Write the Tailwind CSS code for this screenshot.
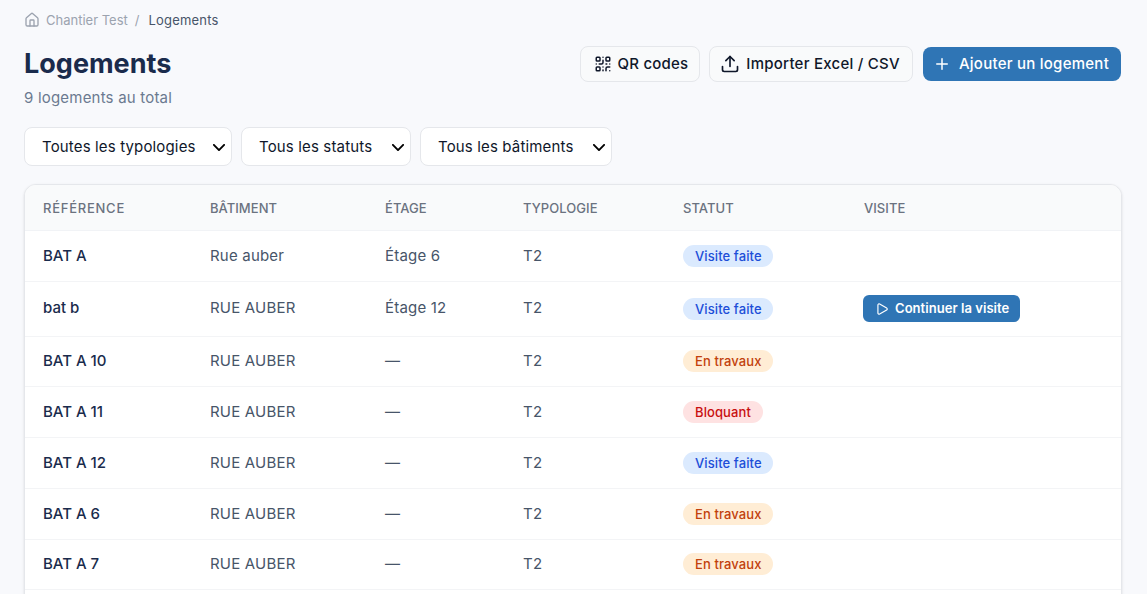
<!DOCTYPE html>
<html lang="fr">
<head>
    <meta charset="UTF-8">
    <meta name="viewport" content="width=device-width, initial-scale=1.0">
    <title>Logements</title>
    <script src="https://cdn.jsdelivr.net/npm/@tailwindcss/browser@4"></script>
</head>
<body class="bg-[#f8f9fc] font-['Inter',sans-serif] h-[594px] overflow-hidden">
<div class="px-6 pt-3">

    <!--breadcrumb-->
    <nav class="flex items-center h-4 text-[13px] leading-4">
        <svg class="w-4 h-4 text-[#9ca3af] mr-1.5" viewBox="0 0 24 24" fill="none" stroke="currentColor" stroke-width="2" stroke-linecap="round" stroke-linejoin="round"><path d="M15 21v-8a1 1 0 0 0-1-1h-4a1 1 0 0 0-1 1v8"/><path d="M3 10a2 2 0 0 1 .709-1.528l7-5.999a2 2 0 0 1 2.582 0l7 5.999A2 2 0 0 1 21 10v9a2 2 0 0 1-2 2H5a2 2 0 0 1-2-2z"/></svg>
        <span class="text-[#9ca3af]">Chantier Test</span>
        <span class="text-[#9ca3af] ml-[7px] mr-[9px]">/</span>
        <span class="text-[#475569] tracking-[0.2px]">Logements</span>
    </nav>

    <!--title + actions-->
    <div class="flex justify-between items-start mt-[19px]">
        <div class="pt-px">
            <h1 class="text-[27px] leading-8 font-bold text-[#1a2b4c]">Logements</h1>
            <p class="text-[15px] leading-5 tracking-[0.2px] text-[#6b7a90] mt-[8px]">9 logements au total</p>
        </div>
        <div class="flex items-center -mt-px mr-0.5">
            <button class="h-9 pl-[13px] pr-[11px] flex items-center gap-1.5 rounded-lg border border-[#e5e7eb] bg-[#f9fafb] text-[15px] tracking-[0.2px] font-medium text-[#0f172a]">
                <svg class="w-[18px] h-[18px]" viewBox="0 0 24 24" fill="none" stroke="currentColor" stroke-width="2" stroke-linecap="round" stroke-linejoin="round"><rect width="5" height="5" x="3" y="3" rx="1"/><rect width="5" height="5" x="16" y="3" rx="1"/><rect width="5" height="5" x="3" y="16" rx="1"/><path d="M21 16h-3a2 2 0 0 0-2 2v3"/><path d="M21 21v.01"/><path d="M12 7v3a2 2 0 0 1-2 2H7"/><path d="M3 12h.01"/><path d="M12 3h.01"/><path d="M12 16v.01"/><path d="M16 12h1"/><path d="M21 12v.01"/><path d="M12 21v-1"/></svg>
                QR codes
            </button>
            <button class="ml-[9px] h-9 pl-2.5 pr-3 flex items-center gap-1.5 rounded-lg border border-[#e5e7eb] bg-[#f9fafb] text-[15px] tracking-[0.25px] font-medium text-[#0f172a]">
                <svg class="w-5 h-5" viewBox="0 0 24 24" fill="none" stroke="currentColor" stroke-width="2" stroke-linecap="round" stroke-linejoin="round"><path d="M21 15v4a2 2 0 0 1-2 2H5a2 2 0 0 1-2-2v-4"/><polyline points="17 8 12 3 7 8"/><line x1="12" x2="12" y1="3" y2="15"/></svg>
                Importer Excel / CSV
            </button>
            <button class="ml-2.5 h-[34px] pl-2.5 pr-3 flex items-center gap-2 rounded-lg bg-[#2f75b5] text-[15px] tracking-[0.25px] font-medium text-white">
                <svg class="w-[18px] h-[18px]" viewBox="0 0 24 24" fill="none" stroke="currentColor" stroke-width="2" stroke-linecap="round" stroke-linejoin="round"><path d="M5 12h14"/><path d="M12 5v14"/></svg>
                Ajouter un logement
            </button>
        </div>
    </div>

    <!--filters-->
    <div class="flex gap-[9px] mt-[19px] text-[15px] tracking-[0.15px] text-[#0f172a]">
        <div class="h-[39px] w-[208px] pl-[17px] pr-1.5 pt-[2px] flex items-center justify-between rounded-lg border border-[#e5e7eb] bg-white">
            Toutes les typologies
            <svg class="w-3 h-[7px] text-black" viewBox="5 8 14 8" fill="none" stroke="currentColor" stroke-width="2.2" stroke-linecap="round" stroke-linejoin="round"><path d="m6 9 6 6 6-6"/></svg>
        </div>
        <div class="h-[39px] w-[170px] pl-[17px] pr-1.5 pt-[2px] flex items-center justify-between rounded-lg border border-[#e5e7eb] bg-white">
            Tous les statuts
            <svg class="w-3 h-[7px] text-black" viewBox="5 8 14 8" fill="none" stroke="currentColor" stroke-width="2.2" stroke-linecap="round" stroke-linejoin="round"><path d="m6 9 6 6 6-6"/></svg>
        </div>
        <div class="h-[39px] w-[192px] pl-[17px] pr-1.5 pt-[2px] flex items-center justify-between rounded-lg border border-[#e5e7eb] bg-white">
            Tous les bâtiments
            <svg class="w-3 h-[7px] text-black" viewBox="5 8 14 8" fill="none" stroke="currentColor" stroke-width="2.2" stroke-linecap="round" stroke-linejoin="round"><path d="m6 9 6 6 6-6"/></svg>
        </div>
    </div>

    <!--table-->
    <div class="mt-[18px] w-[1098px] rounded-xl border border-[#e5e7eb] bg-white overflow-hidden shadow-sm">
        <table class="w-full text-[15px] tracking-[0.2px] table-fixed">
            <thead>
                <tr class="h-[45px] bg-[#f9fafb] border-b border-[#f1f3f6] text-left text-[13px] tracking-[0.05px] text-[#6b7280] [&>th]:pt-[2px]">
                    <th class="w-[185px] pl-[18px] font-medium tracking-[0.75px]">RÉFÉRENCE</th>
                    <th class="w-[175px] font-medium">BÂTIMENT</th>
                    <th class="w-[138px] font-medium">ÉTAGE</th>
                    <th class="w-[160px] font-medium">TYPOLOGIE</th>
                    <th class="w-[180px] font-medium">STATUT</th>
                    <th class="pl-px font-medium">VISITE</th>
                </tr>
            </thead>
            <tbody class="text-[#475569]">
                <tr class="h-[51px] border-b border-[#f3f4f6] [&>td]:pt-[2px]">
                    <td class="pl-[18px] font-medium tracking-normal text-[#1a2b4c]">BAT A</td><td>Rue auber</td><td>Étage 6</td><td>T2</td>
                    <td><span class="inline-block pl-3 pr-[11px] py-[3px] rounded-full text-[13px] tracking-[0.1px] leading-4 font-medium bg-[#dbeafe] text-[#1d4ed8]">Visite faite</span></td><td></td>
                </tr>
                <tr class="h-[55px] border-b border-[#f3f4f6]">
                    <td class="pl-[18px] font-medium tracking-normal text-[#1a2b4c]">bat b</td><td>RUE AUBER</td><td>Étage 12</td><td>T2</td>
                    <td class="pt-[2px]"><span class="inline-block pl-3 pr-[11px] py-[3px] rounded-full text-[13px] tracking-[0.1px] leading-4 font-medium bg-[#dbeafe] text-[#1d4ed8]">Visite faite</span></td>
                    <td>
                        <button class="h-[27px] pl-3 pr-[11px] inline-flex items-center gap-[6px] rounded-md bg-[#2f75b5] text-[13px] tracking-[0.05px] font-semibold text-white">
                            <svg class="w-[14px] h-[14px]" viewBox="0 0 24 24" fill="none" stroke="currentColor" stroke-width="2" stroke-linecap="round" stroke-linejoin="round"><path d="M5 5a2 2 0 0 1 3.008-1.728l11.997 6.998a2 2 0 0 1 .003 3.458l-12 7A2 2 0 0 1 5 19z"/></svg>
                            Continuer la visite
                        </button>
                    </td>
                </tr>
                <tr class="h-[50px] border-b border-[#f3f4f6]">
                    <td class="pl-[18px] font-medium tracking-normal text-[#1a2b4c]">BAT A 10</td><td>RUE AUBER</td><td>—</td><td>T2</td>
                    <td><span class="inline-block pl-3 pr-[11px] py-[3px] rounded-full text-[13px] tracking-[0.1px] leading-4 font-medium bg-[#ffedd5] text-[#c2410c]">En travaux</span></td><td></td>
                </tr>
                <tr class="h-[51px] border-b border-[#f3f4f6] [&>td]:pt-[2px]">
                    <td class="pl-[18px] font-medium tracking-normal text-[#1a2b4c]">BAT A 11</td><td>RUE AUBER</td><td>—</td><td>T2</td>
                    <td><span class="inline-block px-3 py-[3px] rounded-full text-[13px] tracking-[0.1px] leading-4 font-medium bg-[#fee2e2] text-[#c81010]">Bloquant</span></td><td></td>
                </tr>
                <tr class="h-[51px] border-b border-[#f3f4f6] [&>td]:pt-[2px]">
                    <td class="pl-[18px] font-medium tracking-normal text-[#1a2b4c]">BAT A 12</td><td>RUE AUBER</td><td>—</td><td>T2</td>
                    <td><span class="inline-block pl-3 pr-[11px] py-[3px] rounded-full text-[13px] tracking-[0.1px] leading-4 font-medium bg-[#dbeafe] text-[#1d4ed8]">Visite faite</span></td><td></td>
                </tr>
                <tr class="h-[51px] border-b border-[#f3f4f6] [&>td]:pt-[2px]">
                    <td class="pl-[18px] font-medium tracking-normal text-[#1a2b4c]">BAT A 6</td><td>RUE AUBER</td><td>—</td><td>T2</td>
                    <td><span class="inline-block pl-3 pr-[11px] py-[3px] rounded-full text-[13px] tracking-[0.1px] leading-4 font-medium bg-[#ffedd5] text-[#c2410c]">En travaux</span></td><td></td>
                </tr>
                <tr class="h-[50px] border-b border-[#f3f4f6]">
                    <td class="pl-[18px] font-medium tracking-normal text-[#1a2b4c]">BAT A 7</td><td>RUE AUBER</td><td>—</td><td>T2</td>
                    <td><span class="inline-block pl-3 pr-[11px] py-[3px] rounded-full text-[13px] tracking-[0.1px] leading-4 font-medium bg-[#ffedd5] text-[#c2410c]">En travaux</span></td><td></td>
                </tr>
                <!--next row starts just above the fold, its text is out of frame-->
                <tr class="h-[51px]"><td colspan="6"></td></tr>
            </tbody>
        </table>
    </div>
</div>
</body>
</html>
